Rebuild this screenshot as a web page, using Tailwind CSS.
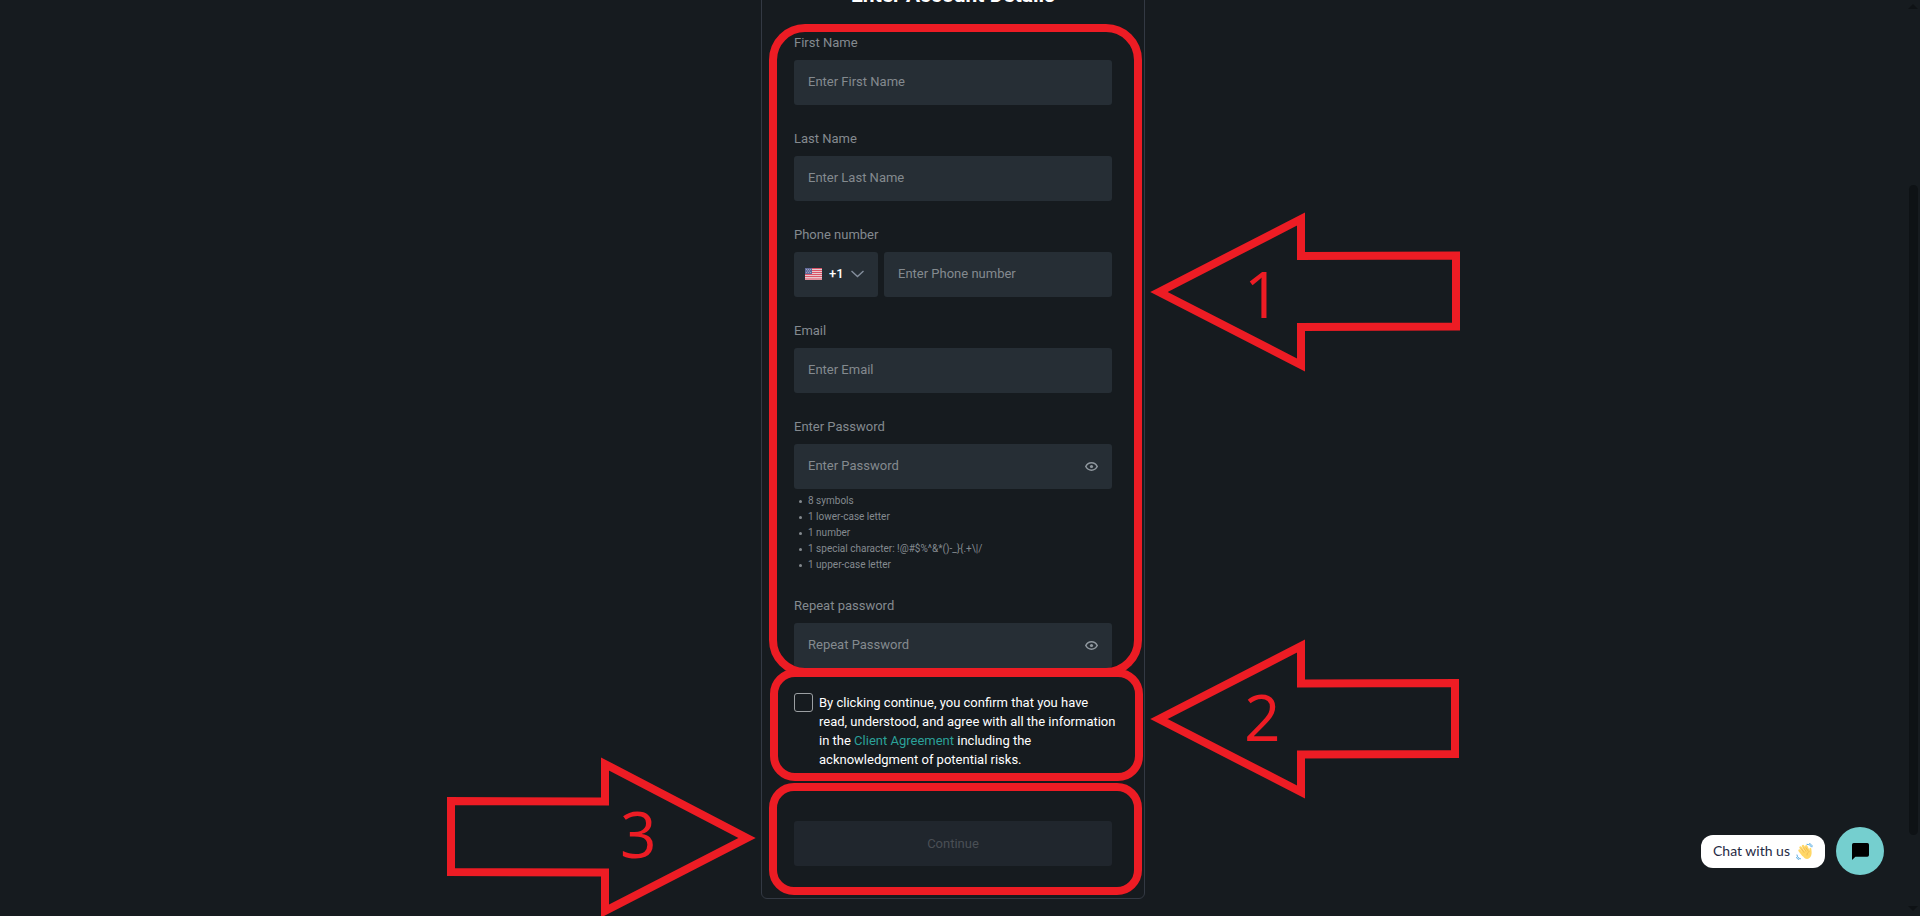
<!DOCTYPE html>
<html lang="en">
<head>
    <meta charset="UTF-8">
    <meta name="viewport" content="width=device-width, initial-scale=1.0">
    <title>Enter Account Details</title>
    <script src="https://cdn.jsdelivr.net/npm/@tailwindcss/browser@4"></script>
</head>
<body class="bg-[#161b1f] font-['Roboto',sans-serif] text-[13px] text-[#848a8f] h-screen overflow-hidden">
    <div class="flex h-full">
        <main class="flex-1 flex justify-center items-start">
            <div class="relative -mt-[52px] w-full max-w-96 rounded-md border border-[#333943] px-8 pt-8 pb-8">
                <h1 class="mb-6 text-center text-[21px] leading-7 font-bold text-white">Enter Account Details</h1>

                <form id="accountForm" class="flex flex-col gap-6">
                    <div class="flex flex-col gap-2">
                        <label for="firstName" class="leading-[19px]">First Name</label>
                        <input type="text" id="firstName" placeholder="Enter First Name" class="w-full h-[45px] px-[14px] pb-[2px] rounded-[3px] bg-[#262e35] text-white placeholder:text-[#848a8f] outline-none">
                    </div>
                    <div class="flex flex-col gap-2">
                        <label for="lastName" class="leading-[19px]">Last Name</label>
                        <input type="text" id="lastName" placeholder="Enter Last Name" class="w-full h-[45px] px-[14px] pb-[2px] rounded-[3px] bg-[#262e35] text-white placeholder:text-[#848a8f] outline-none">
                    </div>
                    <div class="flex flex-col gap-2">
                        <label for="phone" class="leading-[19px]">Phone number</label>
                        <div class="flex gap-[6px]">
                            <div class="relative w-[84px] shrink-0">
                                <select id="countryCode" aria-label="Country code" class="appearance-none w-full h-[45px] pl-[35px] pb-[2px] rounded-[3px] bg-[#262e35] text-white font-medium outline-none">
                                    <option>+1</option>
                                    <option>+44</option>
                                </select>
                                <svg class="absolute left-[11px] top-4 pointer-events-none" width="17" height="12" viewBox="0 0 17 12">
                                    <rect width="17" height="12" fill="#e9c9ce"/>
                                    <path d="M0 .5h17M0 2.5h17M0 4.5h17M0 6.5h17M0 8.5h17M0 11h17" stroke="#dc5468" stroke-width="1.1"/>
                                    <rect width="7" height="6" fill="#626a99"/>
                                    <path d="M1 1.5h1M3 1.5h1M5 1.5h1M2 3h1M4 3h1M1 4.5h1M3 4.5h1M5 4.5h1" stroke="#aab0cc" stroke-width=".8"/>
                                </svg>
                                <svg class="absolute right-[14px] top-[18px] pointer-events-none" width="13" height="8" viewBox="0 0 13 8" fill="none" stroke="#848e9c" stroke-width="1.4">
                                    <path d="M.5 1l6 5.500l6-5.500"/>
                                </svg>
                            </div>
                            <input type="tel" id="phone" placeholder="Enter Phone number" class="flex-1 min-w-0 h-[45px] px-[14px] pb-[2px] rounded-[3px] bg-[#262e35] text-white placeholder:text-[#848a8f] outline-none">
                        </div>
                    </div>
                    <div class="flex flex-col gap-2">
                        <label for="email" class="leading-[19px]">Email</label>
                        <input type="email" id="email" placeholder="Enter Email" class="w-full h-[45px] px-[14px] pb-[2px] rounded-[3px] bg-[#262e35] text-white placeholder:text-[#848a8f] outline-none">
                    </div>
                    <div>
                        <label for="password" class="block mb-2 leading-[19px]">Enter Password</label>
                        <div class="relative">
                            <input type="password" id="password" placeholder="Enter Password" class="block w-full h-[45px] pl-[14px] pr-10 pb-[2px] rounded-[3px] bg-[#262e35] text-white placeholder:text-[#848a8f] outline-none">
                            <button type="button" data-toggle="password" aria-label="Show password" class="absolute right-[14px] top-[18px]">
                                <svg width="13" height="9" viewBox="0 0 13 9" fill="none" stroke="#8f979e" stroke-width="1.600">
                                    <path d="M.8 4.500C2 2.200 4 .8 6.500.8S11 2.200 12.200 4.500C11 6.800 9 8.200 6.500 8.200S2 6.800.8 4.500z"/>
                                    <circle cx="6.500" cy="4.500" r="1.600" fill="#8f979e" stroke="none"/>
                                </svg>
                            </button>
                        </div>
                        <ul class="mt-1 -mb-px pl-[5px] text-[10px] leading-4">
                            <li class="flex items-center gap-[6px] before:size-[3px] before:rounded-full before:bg-[#848a8f]">8 symbols</li>
                            <li class="flex items-center gap-[6px] before:size-[3px] before:rounded-full before:bg-[#848a8f]">1 lower-case letter</li>
                            <li class="flex items-center gap-[6px] before:size-[3px] before:rounded-full before:bg-[#848a8f]">1 number</li>
                            <li class="flex items-center gap-[6px] before:size-[3px] before:rounded-full before:bg-[#848a8f]">1 special character: !@#$%^&amp;*()-_}{.+\|/</li>
                            <li class="flex items-center gap-[6px] before:size-[3px] before:rounded-full before:bg-[#848a8f]">1 upper-case letter</li>
                        </ul>
                    </div>
                    <div class="flex flex-col gap-2">
                        <label for="repeatPassword" class="leading-[19px]">Repeat password</label>
                        <div class="relative">
                            <input type="password" id="repeatPassword" placeholder="Repeat Password" class="block w-full h-[45px] pl-[14px] pr-10 pb-[2px] rounded-[3px] bg-[#262e35] text-white placeholder:text-[#848a8f] outline-none">
                            <button type="button" data-toggle="repeatPassword" aria-label="Show repeated password" class="absolute right-[14px] top-[18px]">
                                <svg width="13" height="9" viewBox="0 0 13 9" fill="none" stroke="#8f979e" stroke-width="1.600">
                                    <path d="M.8 4.500C2 2.200 4 .8 6.500.8S11 2.200 12.200 4.500C11 6.800 9 8.200 6.500 8.200S2 6.800.8 4.500z"/>
                                    <circle cx="6.500" cy="4.500" r="1.600" fill="#8f979e" stroke="none"/>
                                </svg>
                            </button>
                        </div>
                    </div>
                    <div class="flex items-start gap-[6px] pt-px">
                        <input type="checkbox" id="agree" class="appearance-none shrink-0 size-[19px] rounded-[3px] border border-[#9b9fa2] checked:bg-[#2aa59c]">
                        <label for="agree" class="leading-[19px] text-white whitespace-nowrap">By clicking continue, you confirm that you have<br>read, understood, and agree with all the information<br>in the <a href="#" class="text-[#2ba199]">Client Agreement</a> including the<br>acknowledgment of potential risks.</label>
                    </div>
                    <button type="submit" id="continueBtn" disabled class="mt-7 h-[45px] rounded-[3px] bg-[#20262d] text-[#4a4f55] enabled:bg-[#2aa59c] enabled:text-white">Continue</button>
                </form>

                <!-- Step outlines -->
                <div class="absolute left-[7px] right-[2px] top-[75px] h-[652px] rounded-[36px] border-8 border-[#ed1c24] pointer-events-none"></div>
                <div class="absolute left-2 right-px top-[720px] h-[112px] rounded-[25px] border-8 border-[#ed1c24] pointer-events-none"></div>
                <div class="absolute left-[7px] right-[2px] top-[834px] h-[112px] rounded-[25px] border-8 border-[#ed1c24] pointer-events-none"></div>

                <!-- Step arrows -->
                <svg class="absolute left-[388px] top-[261px] pointer-events-none" width="312" height="164" viewBox="0 0 312 164">
                    <path d="M9 82L151 9v37l155-.5v71L151 117v38z" fill="none" stroke="#ed1c24" stroke-width="8"/>
                    <text x="94" y="108" font-family="Open Sans" font-size="64" fill="#ed1c24">1</text>
                </svg>
                <svg class="absolute left-[388px] top-[688px] pointer-events-none" width="312" height="164" viewBox="0 0 312 164">
                    <path d="M9 82L151 9v37.500l154-.5v71l-154 .5V155z" fill="none" stroke="#ed1c24" stroke-width="8"/>
                    <text x="94" y="104" font-family="Open Sans" font-size="64" fill="#ed1c24">2</text>
                </svg>
                <svg class="absolute right-[388px] top-[807px] pointer-events-none" width="312" height="164" viewBox="0 0 312 164">
                    <path d="M303 82L161 8v37.500L7 45v71l154 .5V155z" fill="none" stroke="#ed1c24" stroke-width="8"/>
                    <text x="176" y="102" font-family="Open Sans" font-size="64" fill="#ed1c24">3</text>
                </svg>
            </div>
        </main>

        <!-- Page scroll track -->
        <div class="w-[14px] shrink-0 flex flex-col items-center py-1" aria-hidden="true">
            <svg width="10" height="6" viewBox="0 0 10 6" fill="#0e1215"><path d="M0 5l5-5l5 5z"/></svg>
            <div class="mt-[175px] mb-[71px] flex-1 w-[9px] rounded-full bg-[#0e1215]"></div>
            <svg width="10" height="6" viewBox="0 0 10 6" fill="#0e1215"><path d="M0 0l5 5l5-5z"/></svg>
        </div>
    </div>

    <!-- Chat widget -->
    <div class="fixed right-9 bottom-[41px] flex items-center gap-[11px]">
        <button type="button" class="flex items-center gap-[6px] h-[33px] px-3 rounded-xl bg-white text-[#1f2a44] text-sm font-['Lato',sans-serif] whitespace-nowrap">
            Chat with us
            <svg width="17" height="17" viewBox="0 0 17 17" fill="none" stroke-linecap="round">
                <path d="M3.500 7.500L7 12M4.500 4.500l4.500 6M7 3l4 6M10.200 3.200l2.500 5" stroke="#ffd766" stroke-width="2.400"/>
                <path d="M5 9.500L12 6.500L13.200 8.500L13.500 5.500C13.700 4.500 15.200 4.600 15.300 5.800C15.500 8 16 10 15.200 12.500C13.800 16.500 9.500 17 7.500 14z" fill="#ffd766"/>
                <path d="M5.300 5.800l2.700 3.600M7.500 4.800l2.500 3.500M10 4.800l2 3M11 12c0-2 1-3 2.200-3.500" stroke="#e8ab48" stroke-width=".6"/>
                <path d="M11 1.300c2 0 3.500 1 4.500 2.600M13.500.7c1.500.3 2.300 1.200 2.800 2.400M1 12c.2 2 1.300 3.300 3.500 3.800M.6 14.500c.3 1 1 1.700 2.200 1.900" stroke="#55a9e0" stroke-width="1"/>
            </svg>
        </button>
        <button type="button" aria-label="Open chat" class="flex items-center justify-center size-12 rounded-full bg-[#75cfcf]">
            <svg width="17" height="17" viewBox="0 0 17 17"><path d="M1.700 0H15.300Q17 0 17 1.700V12Q17 13.700 15.300 13.700H3.400L0 17V1.700Q0 0 1.700 0z"/></svg>
        </button>
    </div>

    <script>
        const agree = document.getElementById('agree');
        const continueBtn = document.getElementById('continueBtn');

        agree.addEventListener('change', function() {
            continueBtn.disabled = !agree.checked;
        });

        document.querySelectorAll('[data-toggle]').forEach(function(btn) {
            btn.addEventListener('click', function() {
                const field = document.getElementById(btn.dataset.toggle);
                field.type = field.type === 'password' ? 'text' : 'password';
            });
        });

        document.getElementById('accountForm').addEventListener('submit', function(e) {
            e.preventDefault();
        });
    </script>
</body>
</html>
